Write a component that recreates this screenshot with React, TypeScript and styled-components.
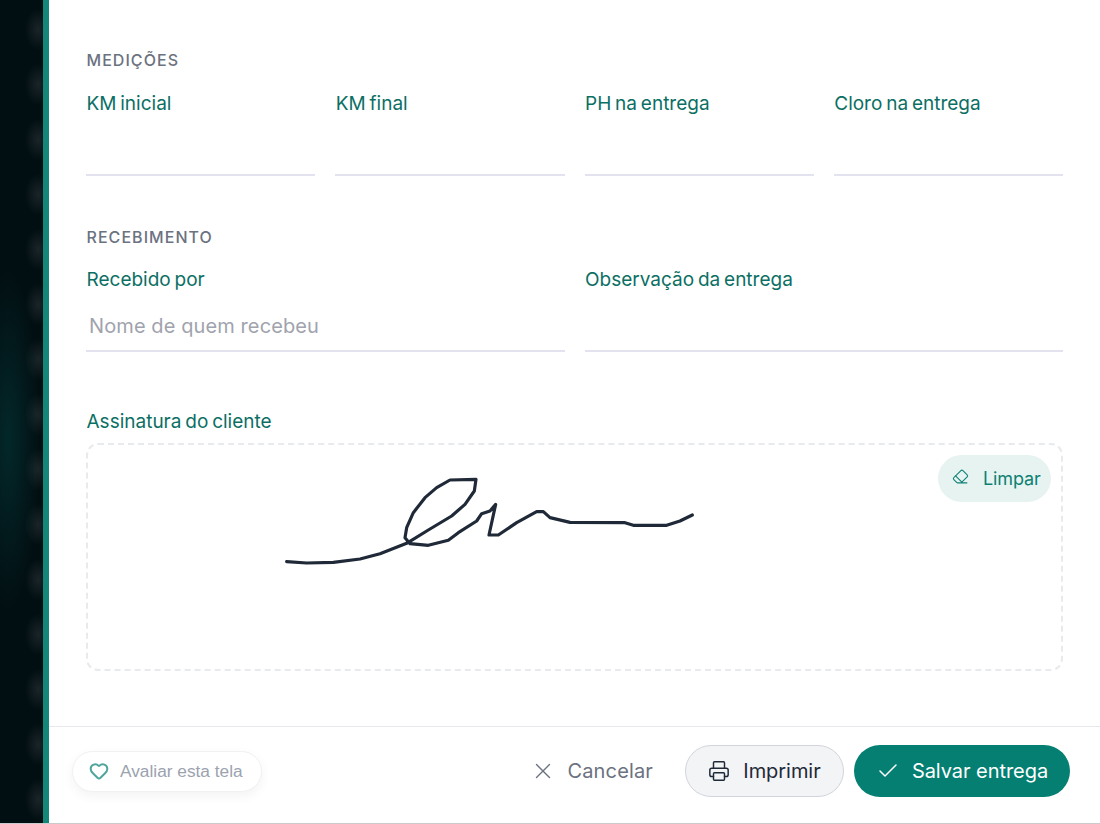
import styled, { createGlobalStyle } from "styled-components";
import { Check, Eraser, Heart, Printer, X } from "lucide-react";

const GlobalStyle = createGlobalStyle`
  html, body {
    margin: 0;
    padding: 0;
    height: 100%;
    overflow: hidden;
    background: #fff;
  }
  * {
    box-sizing: border-box;
  }
`;

const medicoes = ["KM inicial", "KM final", "PH na entrega", "Cloro na entrega"];

const assinatura =
  "M50 302 L110 306 L190 304 L270 294 L330 278 L410 247 L475 207 L545 165 L585 130 L613 90 L618 55 L540 57 L500 80 L465 110 L430 155 L410 200 L405 230 L420 248 L475 253 L535 238 L565 215 L620 180 L635 158 L660 150 L677 130 L657 222 L685 222 L740 185 L800 152 L820 152 L840 170 L900 184 L1065 185 L1090 193 L1190 193 L1230 180 L1267 162";

const App = (): JSX.Element => {
  return (
    <>
      <GlobalStyle />
      <Page>
        <Backdrop />
        <Panel>
          <Content>
            <SectionTitle>MEDIÇÕES</SectionTitle>
            <FourCols>
              {medicoes.map((item) => (
                <Field key={item}>
                  <Label>{item}</Label>
                  <Input />
                </Field>
              ))}
            </FourCols>

            <SectionTitle $spaced>RECEBIMENTO</SectionTitle>
            <TwoCols>
              <Field>
                <Label>Recebido por</Label>
                <Input placeholder="Nome de quem recebeu" />
              </Field>
              <Field>
                <Label>Observação da entrega</Label>
                <Input />
              </Field>
            </TwoCols>

            <SignatureLabel>Assinatura do cliente</SignatureLabel>
            <SignatureBox>
              <svg width="440" height="120" viewBox="0 0 1320 360" fill="none">
                <path
                  d={assinatura}
                  stroke="#1f2937"
                  strokeWidth="9.5"
                  strokeLinecap="round"
                  strokeLinejoin="round"
                />
              </svg>
              <ClearButton>
                <Eraser size={17} strokeWidth={1.5} />
                Limpar
              </ClearButton>
            </SignatureBox>
          </Content>

          <Footer>
            <RateButton>
              <Heart size={20} strokeWidth={2.4} />
              Avaliar esta tela
            </RateButton>
            <Actions>
              <CancelButton>
                <X size={26} strokeWidth={1.3} />
                Cancelar
              </CancelButton>
              <PrintButton>
                <Printer size={22} strokeWidth={1.6} />
                Imprimir
              </PrintButton>
              <SaveButton>
                <Check size={24} strokeWidth={1.5} />
                Salvar entrega
              </SaveButton>
            </Actions>
          </Footer>
        </Panel>
      </Page>
    </>
  );
};

const Page = styled.div`
  display: flex;
  width: 1100px;
  height: 824px;
  overflow: hidden;
  border-bottom: 1px solid #c9cbcd;
  font-family: Inter, "Noto Sans", sans-serif;
`;
const Backdrop = styled.div`
  width: 43px;
  flex: none;
  background:
    radial-gradient(ellipse 13px 21px at 38px 50%, rgba(255, 255, 255, 0.09), transparent) 0 2px / 43px 55px repeat-y,
    radial-gradient(ellipse 32px 170px at 8px 440px, #03282a, transparent),
    #020f12;
`;
const Panel = styled.div`
  flex: 1;
  display: flex;
  flex-direction: column;
  background: #fff;
  border-left: 6px solid #14877b;
`;
const Content = styled.div`
  flex: 1;
  padding: 50px 37px 0;
`;
const SectionTitle = styled.h4<{ $spaced?: boolean }>`
  margin: ${(p) => (p.$spaced ? "51px" : "0")} 0 0;
  padding-left: 0.5px;
  font-size: 16px;
  line-height: 20px;
  font-weight: 500;
  letter-spacing: 1.05px;
  color: #6b7280;
`;
const FourCols = styled.div`
  display: grid;
  grid-template-columns: repeat(4, 1fr);
  gap: 20px;
  margin-top: 23px;
`;
const TwoCols = styled.div`
  display: grid;
  grid-template-columns: repeat(2, 1fr);
  gap: 20px;
  margin-top: 22px;
`;
const Field = styled.div`
  display: flex;
  flex-direction: column;
`;
const Label = styled.label`
  padding-left: 0.5px;
  font-size: 19px;
  line-height: 22px;
  font-weight: 400;
  letter-spacing: 0;
  word-spacing: -1.5px;
  color: #0b6f64;
`;
const Input = styled.input`
  width: 100%;
  height: 61px;
  padding: 11px 3px 0;
  border: 0;
  border-bottom: 2px solid #e3e3f0;
  outline: none;
  background: transparent;
  font-family: inherit;
  font-size: 20px;
  letter-spacing: 0.1px;

  &::placeholder {
    color: #a0a3ad;
  }
`;
const SignatureLabel = styled(Label)`
  display: block;
  margin-top: 59px;
`;
const SignatureBox = styled.div`
  position: relative;
  height: 228px;
  margin-top: 10px;
  padding: 16px 0 0 182px;
  border: 2px dashed #e8eaed;
  border-radius: 12px;

  svg {
    display: block;
  }
`;
const ClearButton = styled.button`
  position: absolute;
  top: 10px;
  right: 10px;
  display: flex;
  align-items: center;
  gap: 14px;
  width: 113px;
  height: 47px;
  padding: 0 0 0 14px;
  border: 0;
  border-radius: 24px;
  background: #e6f3f0;
  color: #0d8074;
  font-family: inherit;
  font-size: 18px;
  letter-spacing: -0.1px;
  white-space: nowrap;

  svg {
    flex: none;
    margin-top: -4px;
  }
`;
const Footer = styled.div`
  height: 97px;
  display: flex;
  align-items: center;
  justify-content: space-between;
  padding: 0 30px 8px 23px;
  border-top: 1px solid #e5e7eb;
`;
const RateButton = styled.button`
  display: flex;
  align-items: center;
  gap: 11px;
  width: 190px;
  height: 41px;
  padding: 0 0 0 16px;
  border: 1px solid #f0f1f3;
  border-radius: 21px;
  background: #fff;
  box-shadow: 0 4px 12px rgba(0, 0, 0, 0.05);
  color: #9ca3af;
  font-family: "Liberation Sans", Arial, sans-serif;
  font-size: 17.3px;
  white-space: nowrap;

  svg {
    color: #4fa59c;
    flex: none;
  }
`;
const Actions = styled.div`
  display: flex;
  align-items: center;
  gap: 10px;
`;
const BaseButton = styled.button`
  display: flex;
  align-items: center;
  justify-content: center;
  gap: 14px;
  height: 52px;
  border-radius: 26px;
  font-family: inherit;
  font-size: 20px;
  font-weight: 400;
  letter-spacing: -0.05px;
  white-space: nowrap;
`;
const CancelButton = styled(BaseButton)`
  padding: 0 22px 0 24px;
  gap: 13px;
  border: 0;
  background: transparent;
  color: #6b7280;
  letter-spacing: 0.15px;

  svg {
    margin: 0 -2px 0 -5px;
  }
`;
const PrintButton = styled(BaseButton)`
  width: 159px;
  gap: 13px;
  border: 1px solid #d1d5db;
  background: #f3f4f6;
  color: #1f2937;
`;
const SaveButton = styled(BaseButton)`
  width: 216px;
  gap: 12px;
  border: 0;
  background: #047f72;
  color: #fff;
`;

export default App;
